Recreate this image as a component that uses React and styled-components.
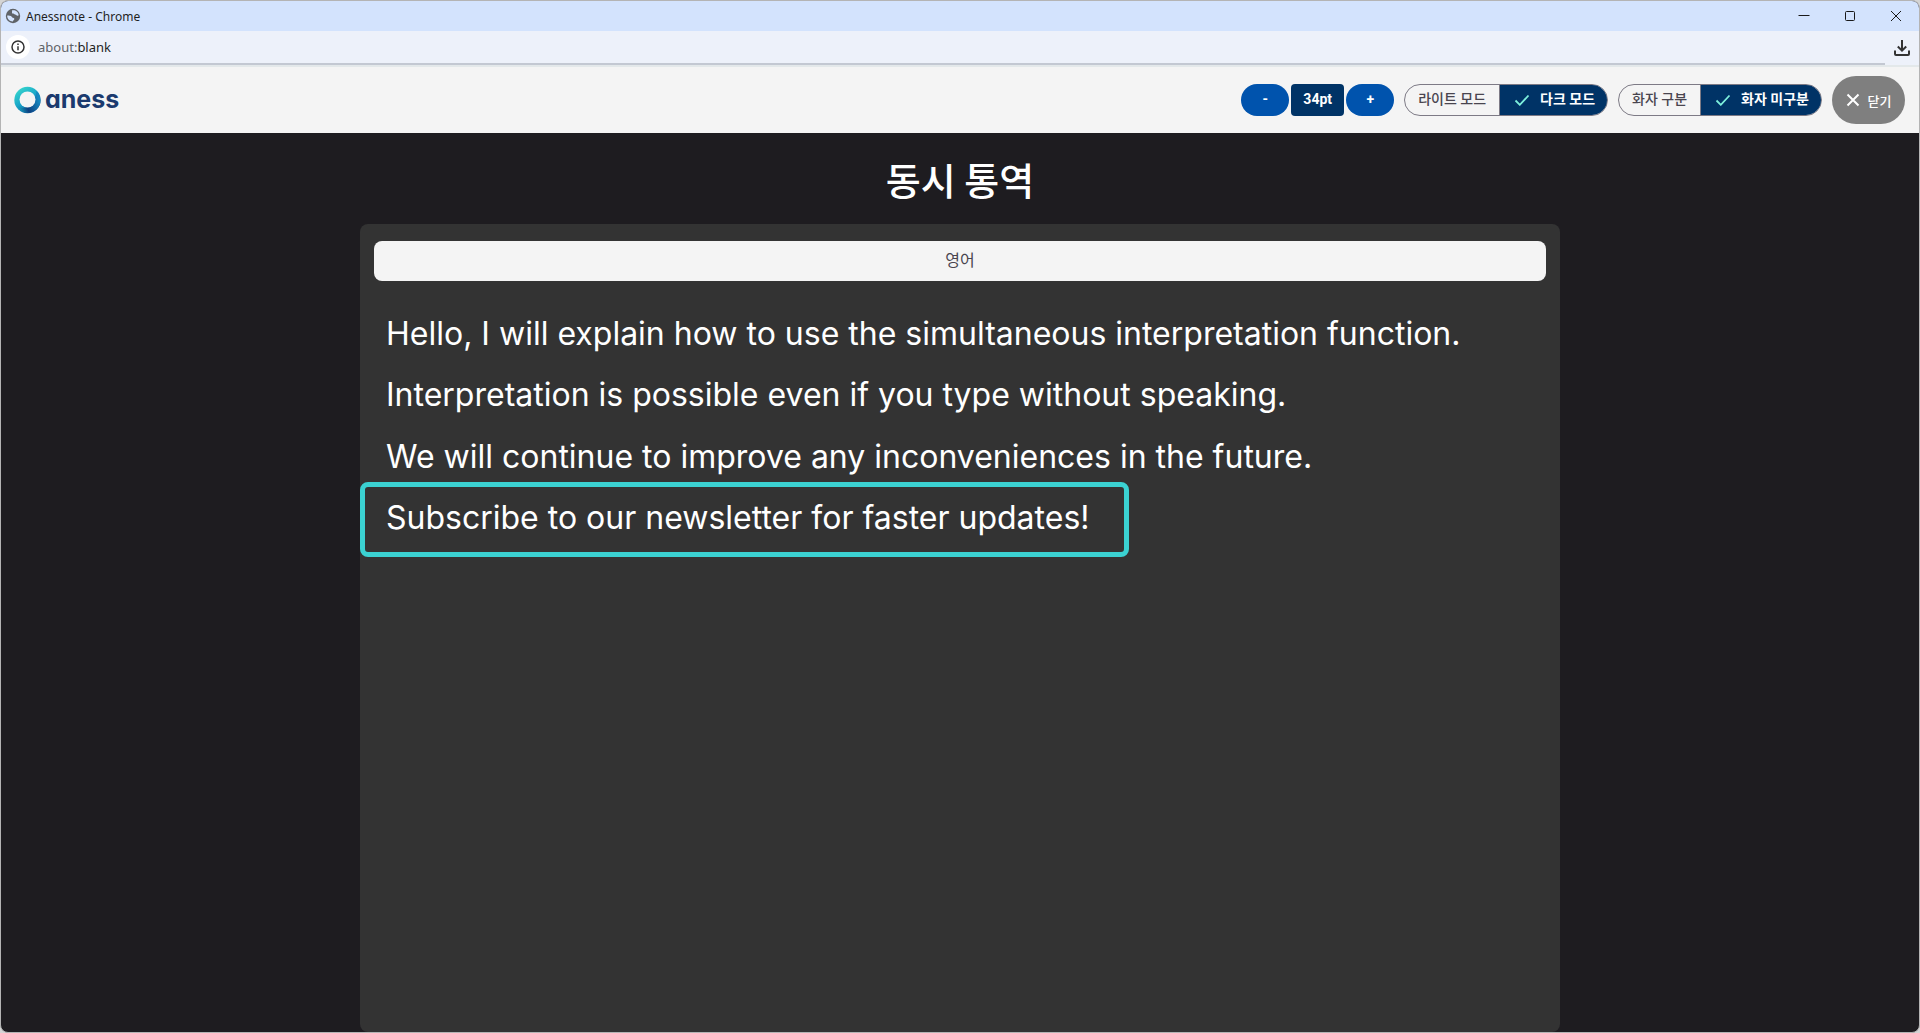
import React, { useState } from 'react';
import styled, { createGlobalStyle, css } from 'styled-components';

const colors = {
  navy: '#003366',
  blue: '#0053ad',
  mint: '#7df0dc',
  teal: '#3bd2d2',
  light: '#f4f4f4',
  dark: '#1e1c20',
  panel: '#333333',
  outline: '#7d7a85',
};

const GlobalStyle = createGlobalStyle`
  * {
    box-sizing: border-box;
  }
  body {
    margin: 0;
    background: #d4d4d4;
    font-family: Roboto, 'Noto Sans CJK KR', sans-serif;
  }
  button {
    font: inherit;
    cursor: pointer;
  }
`;

const Window = styled.div`
  display: flex;
  flex-direction: column;
  min-height: 100vh;
  border: 1px solid #b4b4b4;
  border-radius: 8px;
  overflow: hidden;
  background: ${colors.dark};
`;

const TitleBar = styled.div`
  display: flex;
  align-items: center;
  height: 30px;
  padding-left: 4px;
  background: #d3e3fd;
  color: #1f1f1f;
  font-family: 'Noto Sans', sans-serif;
  font-size: 12px;
`;

const WindowTitle = styled.span`
  flex: 1;
  margin-left: 5px;
`;

const WindowButton = styled.button`
  display: flex;
  align-items: center;
  justify-content: center;
  width: 46px;
  height: 30px;
  padding: 0;
  border: 0;
  background: none;
  color: #1a1a1a;
`;

const AddressBar = styled.div`
  display: flex;
  align-items: center;
  height: 36px;
  background: #edf1fa;
  border-bottom: 2px solid #e3e8ea;
`;

const Address = styled.div`
  display: flex;
  flex: 1;
  align-items: center;
  align-self: stretch;
  gap: 8px;
  padding-left: 5px;
  border-bottom: 2px solid #c3c8d2;
  color: #1f1f1f;
  font-family: 'Noto Sans', sans-serif;
  font-size: 13px;
`;

const Scheme = styled.span`
  color: #5f6368;
`;

const SiteInfo = styled.button`
  display: flex;
  align-items: center;
  justify-content: center;
  width: 24px;
  height: 24px;
  padding: 0;
  border: 0;
  border-radius: 50%;
  background: #fff;
`;

const Download = styled.button`
  display: flex;
  align-items: center;
  justify-content: center;
  width: 34px;
  height: 34px;
  padding: 0;
  border: 0;
  background: none;
`;

const Header = styled.header`
  display: flex;
  align-items: center;
  justify-content: space-between;
  height: 66px;
  padding: 0 14px 0 12px;
  background: ${colors.light};
`;

const Logo = styled.a`
  display: flex;
  align-items: flex-start;
  gap: 4px;
  color: #1b3a6e;
  font-family: Inter, sans-serif;
  font-size: 25px;
  font-weight: 700;
  line-height: 26px;
  font-feature-settings: 'cv11';
  text-decoration: none;
`;

const Tools = styled.div`
  display: flex;
  align-items: center;
  gap: 10px;
  font-size: 14px;
  font-weight: 700;
`;

const FontSize = styled.div`
  display: flex;
  align-items: center;
  gap: 2px;
`;

const StepButton = styled.button`
  width: 48px;
  height: 32px;
  padding: 0 0 2px;
  border: 0;
  border-radius: 16px;
  background: ${colors.blue};
  color: #fff;
`;

const SizeValue = styled.output`
  width: 53px;
  height: 32px;
  border-radius: 4px;
  background: ${colors.navy};
  color: #fff;
  line-height: 30px;
  text-align: center;
`;

const Segmented = styled.div`
  display: flex;
  height: 32px;
  border: 1px solid ${colors.outline};
  border-radius: 16px;
  overflow: hidden;
`;

const Segment = styled.button`
  display: flex;
  align-items: center;
  gap: 10px;
  padding: 0 13px 2px;
  border: 0;
  background: transparent;
  color: #49454f;
  font-weight: 500;
  line-height: 20px;

  & + & {
    border-left: 1px solid ${colors.outline};
  }

  ${({ $active }) =>
    $active &&
    css`
      padding: 0 12px 2px 14px;
      background: ${colors.navy};
      color: #fff;
      font-weight: 700;
    `}
`;

const CloseButton = styled.button`
  display: flex;
  align-items: center;
  justify-content: center;
  gap: 8px;
  width: 73px;
  height: 48px;
  padding: 0;
  border: 0;
  border-radius: 24px;
  background: #7f7f7f;
  color: #fff;
  font-size: 13px;
  font-weight: 500;
`;

const Main = styled.main`
  display: flex;
  flex: 1;
  flex-direction: column;
  align-items: center;
`;

const Title = styled.h1`
  margin: 18px 0 17px;
  color: #fff;
  font-family: 'Noto Sans CJK KR', sans-serif;
  font-size: 38px;
  font-weight: 500;
  line-height: 56px;
`;

const Panel = styled.section`
  flex: 1;
  width: 100%;
  max-width: 1200px;
  padding: 17px 14px;
  border-radius: 8px;
  background: ${colors.panel};
`;

const Language = styled.h2`
  margin: 0 0 22px;
  border-radius: 8px;
  background: ${colors.light};
  color: #49454f;
  font-size: 16px;
  font-weight: 400;
  line-height: 40px;
  text-align: center;
`;

const Line = styled.p`
  position: relative;
  width: fit-content;
  margin: 0;
  padding: 0 12px;
  color: #fff;
  font-family: Inter, sans-serif;
  font-size: ${({ $size }) => $size}px;
  line-height: 1.92;

  /* frame round the newest sentence */
  ${({ $current }) =>
    $current &&
    css`
      &::after {
        content: '';
        position: absolute;
        inset: -5px -28px -8px -14px;
        border: 5px solid ${colors.teal};
        border-radius: 8px;
      }
    `}
`;

const GlobeIcon = () => (
  <svg width="16" height="16" viewBox="0 0 16 16" aria-hidden="true">
    <circle cx="8" cy="8" r="7.2" fill="#5f6368" />
    <path
      d="M2.200 7.600c1.200-.3 2.600-.2 3.700.4 1 .5 1 1.500 2 1.700 1.100.2 1.600.6 1.400 1.600-.2.900-1.300 1-1.400 2.300C4.600 13.500 2 11 2.200 7.600zM7.200 2.300c-.6 1 .2 1.300-.2 2.100-.3.700.2 1.300 1.100 1.200 1-.1 1 .8 1.900 1 1.100.2 1.500 1 2.400 1.100.6.1 1-.2 1.300-.5-.2-2.300-1.900-4.300-4.200-4.900z"
      fill="#d3e3fd"
    />
  </svg>
);

const InfoIcon = () => (
  <svg width="14" height="14" viewBox="0 0 14 14" fill="none" stroke="#333" strokeWidth="1.5" aria-hidden="true">
    <circle cx="7" cy="7" r="6" />
    <path d="M7 6.300V10.200M7 3.600V5.100" />
  </svg>
);

const DownloadIcon = () => (
  <svg width="18" height="18" viewBox="0 0 18 18" fill="none" stroke="#333" strokeWidth="2" aria-hidden="true">
    <path d="M9 1v10.500M4.800 7.500L9 11.700l4.200-4.200M2 11.500v3.500q0 1 1 1h12q1 0 1-1v-3.500" />
  </svg>
);

const LogoMark = () => (
  <svg width="28" height="28" viewBox="0 0 28 28" fill="none" aria-hidden="true">
    <defs>
      <linearGradient id="ring" x1="6" y1="3" x2="21" y2="25" gradientUnits="userSpaceOnUse">
        <stop offset="0" stopColor="#35d3cc" />
        <stop offset="0.5" stopColor="#18a5c9" />
        <stop offset="1" stopColor="#0a4f93" />
      </linearGradient>
      <linearGradient id="shade" x1="5" y1="22" x2="26" y2="14" gradientUnits="userSpaceOnUse">
        <stop offset="0" stopColor="#17a6c4" />
        <stop offset="0.4" stopColor="#0c3f80" />
        <stop offset="1" stopColor="#1688c0" />
      </linearGradient>
    </defs>
    <circle cx="14.500" cy="14" r="13.200" fill="url(#ring)" />
    <path d="M4 20C11 25 22 20 23.500 5C28 9 29 18 24 23C18 29 8 28 4 20z" fill="url(#shade)" />
    <circle cx="14.500" cy="13.500" r="8" fill={colors.light} />
  </svg>
);

const CheckIcon = () => (
  <svg width="16" height="14" viewBox="0 0 16 14" fill="none" stroke={colors.mint} strokeWidth="1.800" aria-hidden="true">
    <path d="M1.500 8.500L5.800 12.800L14.500 3.500" />
  </svg>
);

const CrossIcon = () => (
  <svg width="14" height="14" viewBox="0 0 14 14" fill="none" stroke="#fff" strokeWidth="2" aria-hidden="true">
    <path d="M1.500 1.500l11 11M12.500 1.500l-11 11" />
  </svg>
);

const WINDOW_BUTTONS = [
  { label: 'Minimize', path: 'M0.500 5.500h11' },
  { label: 'Maximize', path: 'M2.500 1.500h7q1 0 1 1v7q0 1-1 1h-7q-1 0-1-1v-7q0-1 1-1z' },
  { label: 'Close', path: 'M1 1l10 10M11 1L1 11' },
];

const LINES = [
  'Hello, I will explain how to use the simultaneous interpretation function.',
  'Interpretation is possible even if you type without speaking.',
  'We will continue to improve any inconveniences in the future.',
  'Subscribe to our newsletter for faster updates!',
];

const Toggle = ({ options, label }) => {
  const [active, setActive] = useState(1);
  return (
    <Segmented role="group" aria-label={label}>
      {options.map((option, i) => (
        <Segment key={option} type="button" $active={i === active} aria-pressed={i === active} onClick={() => setActive(i)}>
          {i === active && <CheckIcon />}
          {option}
        </Segment>
      ))}
    </Segmented>
  );
};

const App = () => {
  const [size, setSize] = useState(34);

  return (
    <>
      <GlobalStyle />
      <Window>
        <TitleBar>
          <GlobeIcon />
          <WindowTitle>Anessnote - Chrome</WindowTitle>
          {WINDOW_BUTTONS.map(({ label, path }) => (
            <WindowButton key={label} type="button" aria-label={label}>
              <svg width="12" height="12" viewBox="0 0 12 12" fill="none" stroke="currentColor">
                <path d={path} />
              </svg>
            </WindowButton>
          ))}
        </TitleBar>
        <AddressBar>
          <Address>
            <SiteInfo type="button" aria-label="Site information">
              <InfoIcon />
            </SiteInfo>
            <span>
              <Scheme>about:</Scheme>blank
            </span>
          </Address>
          <Download type="button" aria-label="Downloads">
            <DownloadIcon />
          </Download>
        </AddressBar>
        <Header>
          <Logo href="#">
            <LogoMark />
            aness
          </Logo>
          <Tools>
            <FontSize>
              <StepButton type="button" onClick={() => setSize(size - 1)}>
                -
              </StepButton>
              <SizeValue>{size}pt</SizeValue>
              <StepButton type="button" onClick={() => setSize(size + 1)}>
                +
              </StepButton>
            </FontSize>
            <Toggle label="theme" options={['라이트 모드', '다크 모드']} />
            <Toggle label="speaker" options={['화자 구분', '화자 미구분']} />
            <CloseButton type="button">
              <CrossIcon />
              닫기
            </CloseButton>
          </Tools>
        </Header>
        <Main>
          <Title>동시 통역</Title>
          <Panel>
            <Language>영어</Language>
            {LINES.map((line, i) => (
              <Line key={line} $size={size - 2} $current={i === LINES.length - 1}>
                {line}
              </Line>
            ))}
          </Panel>
        </Main>
      </Window>
    </>
  );
};

export default App;
